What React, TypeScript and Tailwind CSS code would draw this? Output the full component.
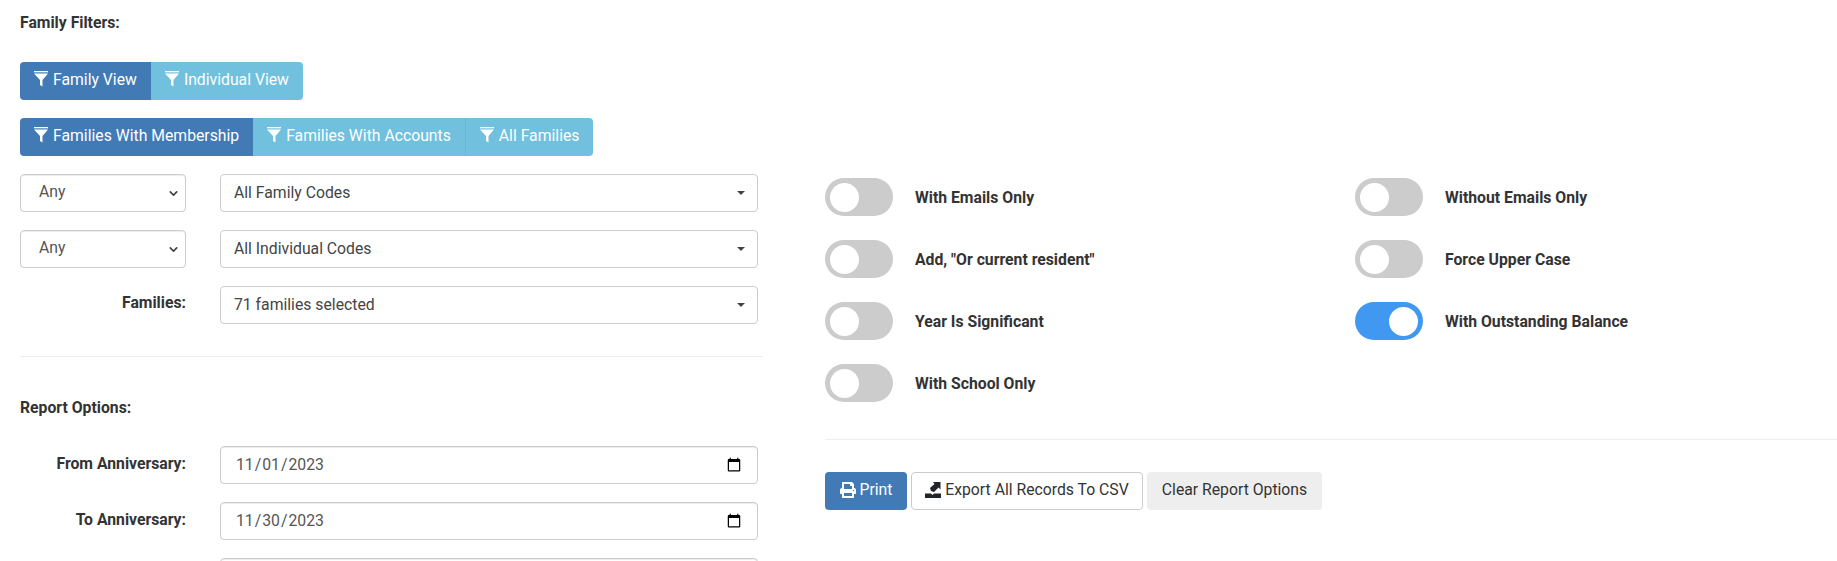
import { ChevronDown } from 'lucide-react'
import { FaPrint } from 'react-icons/fa'

function FilterIcon() {
  return (
    <svg viewBox="0 0 14 16" className="mb-[3px] h-4 w-[14px] shrink-0" fill="currentColor">
      <rect x="0" y="0" width="14" height="1.3" />
      <path d="M0 2.5h14L8.5 9v6.5L6 14V9z" />
    </svg>
  )
}

function ExportIcon() {
  return (
    <svg viewBox="0 0 16 16" className="h-4 w-4 shrink-0" fill="#212529">
      <path d="M0 11.5h6l1.5 1.5 1.5-1.5h7V16H0z" />
      <path d="M8 0h7.5v7.5l-2-2L9 10 6 9l-1-3 4.5-4z" />
    </svg>
  )
}

type GroupProps = { items: string[] }

function FilterGroup({ items }: GroupProps) {
  return (
    <div className="flex h-[38px] w-fit overflow-hidden rounded text-[15.75px] text-white">
      {items.map((item, i) => (
        <button
          key={item}
          className={`flex items-center gap-[5px] px-[14px] pb-[2px] ${i === 0 ? 'bg-[#417ab5]' : 'border-r border-[#66b8d6] bg-[#70c0de] last:border-r-0'}`}
        >
          <FilterIcon />
          {item}
        </button>
      ))}
    </div>
  )
}

function FakeSelect({ label }: { label: string }) {
  return (
    <div className="flex h-[38px] items-center justify-between rounded border border-[#ccc] bg-white pb-[1px] pl-[13px] pr-[12px] text-[15.75px] text-[#444]">
      <span>{label}</span>
      <span className="h-0 w-0 border-x-4 border-t-4 border-x-transparent border-t-[#444]" />
    </div>
  )
}

function CodeRow({ label }: { label: string }) {
  return (
    <div className="grid grid-cols-[166px_538px] gap-x-[34px]">
      <div className="relative">
        <select className="h-[38px] w-full appearance-none rounded border border-[#ccc] bg-white pb-[2px] pl-[18px] text-[15.75px] text-[#555] shadow-[inset_0_1px_1px_rgba(0,0,0,0.075)]">
          <option>Any</option>
        </select>
        <ChevronDown size={13} strokeWidth={3} className="absolute right-[6px] top-[13px] text-[#444]" />
      </div>
      <FakeSelect label={label} />
    </div>
  )
}

function DateRow({ label, value }: { label: string; value?: string }) {
  return (
    <div className="grid grid-cols-[166px_538px] gap-x-[34px]">
      <label className="pt-[6px] text-right text-[15.75px] font-bold">{label}</label>
      <input
        type="date"
        defaultValue={value}
        className="h-[38px] rounded border border-[#ccc] bg-white pl-[14px] pr-[13px] text-[15.75px] text-[#555] shadow-[inset_0_1px_1px_rgba(0,0,0,0.075)]"
      />
    </div>
  )
}

function Toggle({ label, on }: { label: string; on?: boolean }) {
  return (
    <div className="flex h-[38px] items-center">
      <span className={`flex h-[38px] w-[68px] items-center rounded-full px-[5px] ${on ? 'justify-end bg-[#4098f0]' : 'bg-[#ccc]'}`}>
        <span className="h-[29px] w-[29px] rounded-full bg-white" />
      </span>
      <span className="ml-[22px] pt-[1px] text-[15.75px] font-bold">{label}</span>
    </div>
  )
}

export default function App() {
  return (
    <div className="flex h-[561px] overflow-hidden bg-white font-['Roboto',sans-serif] text-[#333]">
      <div className="ml-5 w-[743px] shrink-0">
        <p className="mt-[14px] text-[15.75px] font-bold leading-[18px]">Family Filters:</p>
        <div className="mt-[30px] flex flex-col gap-[18px]">
          <FilterGroup items={['Family View', 'Individual View']} />
          <FilterGroup items={['Families With Membership', 'Families With Accounts', 'All Families']} />
        </div>
        <div className="mt-[18px] flex flex-col gap-[18px]">
          <CodeRow label="All Family Codes" />
          <CodeRow label="All Individual Codes" />
          <div className="grid grid-cols-[166px_538px] gap-x-[34px]">
            <label className="pt-[5px] text-right text-[15.75px] font-bold">Families:</label>
            <FakeSelect label="71 families selected" />
          </div>
        </div>
        <hr className="mt-8 border-[#eee]" />
        <p className="mt-[42px] text-[15.75px] font-bold leading-[18px]">Report Options:</p>
        <div className="mt-[29px] flex flex-col gap-[18px]">
          <DateRow label="From Anniversary:" value="2023-11-01" />
          <DateRow label="To Anniversary:" value="2023-11-30" />
          <DateRow label="" />
        </div>
      </div>
      <div className="ml-[62px] min-w-0 flex-1 pt-[178px]">
        <div className="grid grid-cols-[530px_1fr] gap-y-6">
          <Toggle label="With Emails Only" />
          <Toggle label="Without Emails Only" />
          <Toggle label={'Add, "Or current resident"'} />
          <Toggle label="Force Upper Case" />
          <Toggle label="Year Is Significant" />
          <Toggle label="With Outstanding Balance" on />
          <Toggle label="With School Only" />
        </div>
        <hr className="mt-[37px] border-[#eee]" />
        <div className="mt-[32px] flex gap-1 text-[15.75px]">
          <button className="flex h-[38px] w-[82px] items-center justify-center gap-[4px] rounded bg-[#417ab5] pb-[2px] text-white">
            <FaPrint size={16} />
            Print
          </button>
          <button className="flex h-[38px] w-[232px] items-center justify-center gap-[4px] rounded border border-[#ccc] bg-white pb-[2px]">
            <ExportIcon />
            Export All Records To CSV
          </button>
          <button className="h-[38px] w-[175px] rounded bg-[#eee] pb-[2px]">Clear Report Options</button>
        </div>
      </div>
    </div>
  )
}
